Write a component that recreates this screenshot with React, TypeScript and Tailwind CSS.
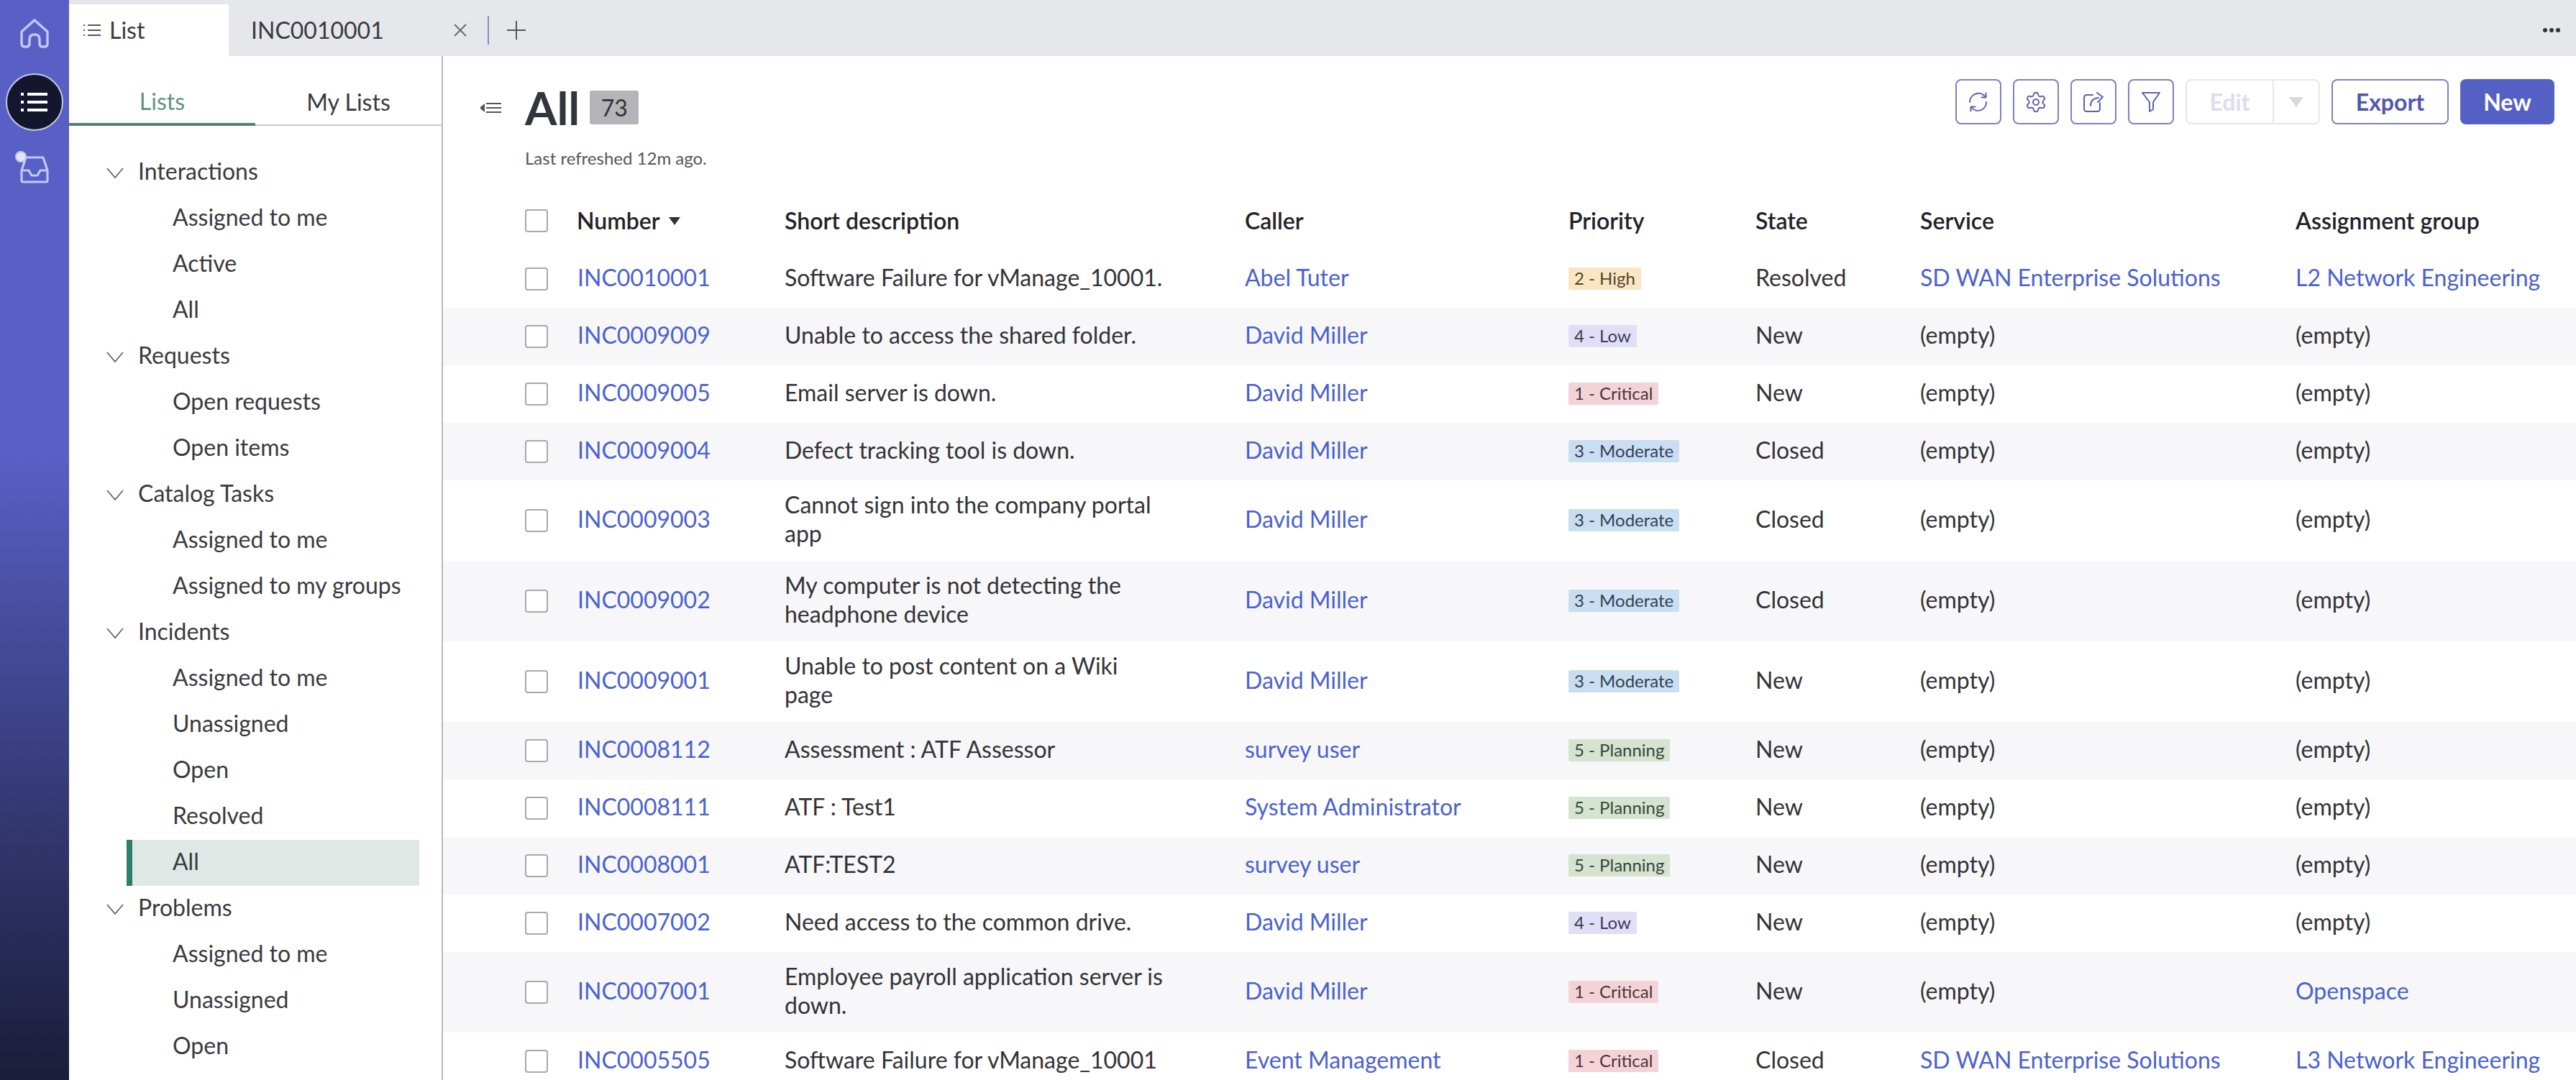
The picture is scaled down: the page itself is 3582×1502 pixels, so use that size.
import React from "react";
import { Settings } from "lucide-react";

type Row = {
  num: string; desc: string[]; caller: string; pri: string; state: string; service: string; group: string;
};

const rows: Row[] = [
  { num: "INC0010001", desc: ["Software Failure for vManage_10001."], caller: "Abel Tuter", pri: "2 - High", state: "Resolved", service: "SD WAN Enterprise Solutions", group: "L2 Network Engineering" },
  { num: "INC0009009", desc: ["Unable to access the shared folder."], caller: "David Miller", pri: "4 - Low", state: "New", service: "(empty)", group: "(empty)" },
  { num: "INC0009005", desc: ["Email server is down."], caller: "David Miller", pri: "1 - Critical", state: "New", service: "(empty)", group: "(empty)" },
  { num: "INC0009004", desc: ["Defect tracking tool is down."], caller: "David Miller", pri: "3 - Moderate", state: "Closed", service: "(empty)", group: "(empty)" },
  { num: "INC0009003", desc: ["Cannot sign into the company portal", "app"], caller: "David Miller", pri: "3 - Moderate", state: "Closed", service: "(empty)", group: "(empty)" },
  { num: "INC0009002", desc: ["My computer is not detecting the", "headphone device"], caller: "David Miller", pri: "3 - Moderate", state: "Closed", service: "(empty)", group: "(empty)" },
  { num: "INC0009001", desc: ["Unable to post content on a Wiki", "page"], caller: "David Miller", pri: "3 - Moderate", state: "New", service: "(empty)", group: "(empty)" },
  { num: "INC0008112", desc: ["Assessment : ATF Assessor"], caller: "survey user", pri: "5 - Planning", state: "New", service: "(empty)", group: "(empty)" },
  { num: "INC0008111", desc: ["ATF : Test1"], caller: "System Administrator", pri: "5 - Planning", state: "New", service: "(empty)", group: "(empty)" },
  { num: "INC0008001", desc: ["ATF:TEST2"], caller: "survey user", pri: "5 - Planning", state: "New", service: "(empty)", group: "(empty)" },
  { num: "INC0007002", desc: ["Need access to the common drive."], caller: "David Miller", pri: "4 - Low", state: "New", service: "(empty)", group: "(empty)" },
  { num: "INC0007001", desc: ["Employee payroll application server is", "down."], caller: "David Miller", pri: "1 - Critical", state: "New", service: "(empty)", group: "Openspace" },
  { num: "INC0005505", desc: ["Software Failure for vManage_10001"], caller: "Event Management", pri: "1 - Critical", state: "Closed", service: "SD WAN Enterprise Solutions", group: "L3 Network Engineering" },
];

const badgeClass: Record<string, string> = {
  "1": "bg-[#f4d3d8] text-[#4a3338]",
  "2": "bg-[#fae6c3] text-[#51452e]",
  "3": "bg-[#c9def1] text-[#2f4256]",
  "4": "bg-[#e0dff5] text-[#3c3c58]",
  "5": "bg-[#d5e3d0] text-[#35473a]",
};

const tree: { title: string; items: string[] }[] = [
  { title: "Interactions", items: ["Assigned to me", "Active", "All"] },
  { title: "Requests", items: ["Open requests", "Open items"] },
  { title: "Catalog Tasks", items: ["Assigned to me", "Assigned to my groups"] },
  { title: "Incidents", items: ["Assigned to me", "Unassigned", "Open", "Resolved", "All"] },
  { title: "Problems", items: ["Assigned to me", "Unassigned", "Open"] },
];

function Checkbox() {
  return <span className="block w-[32px] h-[32px] rounded-[4px] border-2 border-[#a9a9ad] bg-white" />;
}

function Rail() {
  return (
    <div className="w-[96px] shrink-0 h-full flex flex-col items-center bg-linear-to-b from-[#5860c6] from-[42%] to-[#1b1d3a]">
      <svg className="mt-[26px]" width="42" height="42" viewBox="0 0 42 42" fill="none" stroke="#c3c8f0" strokeWidth="3.4" strokeLinejoin="round">
        <path d="M3 18 L21 2 L39 18 V35 Q39 39 35 39 H32 Q28 39 28 35 V29 Q28 22 21 22 Q14 22 14 29 V35 Q14 39 10 39 H7 Q3 39 3 35 Z" />
      </svg>
      <div className="mt-[34px] w-[80px] h-[80px] rounded-full bg-[#14162d] border-2 border-[#c5c8e6] flex items-center justify-center">
        <svg width="38" height="28" viewBox="0 0 38 28" fill="#ffffff">
          <rect x="0" y="1" width="4" height="4" /><rect x="9" y="1" width="28" height="4" />
          <rect x="0" y="12" width="4" height="4" /><rect x="9" y="12" width="28" height="4" />
          <rect x="0" y="23" width="4" height="4" /><rect x="9" y="23" width="28" height="4" />
        </svg>
      </div>
      <div className="relative mt-[28px] w-[56px] h-[56px]">
        <svg className="absolute left-[7px] top-[5px]" width="42" height="40" viewBox="0 0 42 40" fill="none" stroke="#c3c8f0" strokeWidth="3.2" strokeLinejoin="round">
          <path d="M9 4 H33 L39 22 V36 Q39 38 37 38 H5 Q3 38 3 36 V22 Z" />
          <path d="M3 22 H13 L17 29 H25 L29 22 H39" />
        </svg>
        <span className="absolute left-[1px] top-0 w-[16px] h-[16px] rounded-full bg-[#e4e6f6] border-2 border-[#c3c8f0]" />
      </div>
    </div>
  );
}

function Tabs() {
  return (
    <div className="h-[78px] shrink-0 bg-[#e6e7eb] flex items-stretch text-[32px] text-[#3b3b3f]">
      <div className="w-[222px] mt-[6px] bg-white flex items-center pl-[20px] gap-[12px]">
        <svg width="24" height="18" viewBox="0 0 24 18" stroke="#55555a" strokeWidth="2" fill="none">
          <path d="M0 2 H2 M6 2 H24 M0 9 H2 M6 9 H24 M0 16 H2 M6 16 H24" />
        </svg>
        <span>List</span>
      </div>
      <div className="flex items-center pl-[31px] pt-[6px]">
        <span className="w-[282px]">INC0010001</span>
        <svg width="18" height="18" viewBox="0 0 18 18" stroke="#66666c" strokeWidth="1.8" fill="none">
          <path d="M1 1 L17 17 M17 1 L1 17" />
        </svg>
        <span className="ml-[29px] w-[2px] h-[40px] bg-[#8d8fc2]" />
        <svg className="ml-[25px]" width="26" height="26" viewBox="0 0 26 26" stroke="#55555a" strokeWidth="2" fill="none">
          <path d="M13 0 V26 M0 13 H26" />
        </svg>
      </div>
      <div className="ml-auto flex items-center pr-[22px] pt-[6px] gap-[3px]">
        <span className="w-[6px] h-[6px] rounded-full bg-[#333338]" />
        <span className="w-[6px] h-[6px] rounded-full bg-[#333338]" />
        <span className="w-[6px] h-[6px] rounded-full bg-[#333338]" />
      </div>
    </div>
  );
}

function Sidebar() {
  return (
    <div className="w-[520px] shrink-0 h-full border-r-2 border-[#b9b9bc] bg-white overflow-hidden text-[32px] text-[#3a3a3e]">
      <div className="flex h-[97px]">
        <div className="w-[259px] flex items-center justify-center pt-[32px] border-b-4 border-[#54806f] text-[#5f9484]">Lists</div>
        <div className="flex-1 flex items-center justify-center pt-[32px] border-b-2 border-[#c9c9cc]">My Lists</div>
      </div>
      <div className="pt-[33px]">
        {tree.map((g) => (
          <div key={g.title}>
            <div className="h-[64px] flex items-center pl-[52px]">
              <svg width="24" height="15" viewBox="0 0 24 15" stroke="#66666a" strokeWidth="1.8" fill="none">
                <path d="M1 1 L12 14 L23 1" />
              </svg>
              <span className="ml-[20px] pb-[4px]">{g.title}</span>
            </div>
            {g.items.map((it, i) => {
              const active = g.title === "Incidents" && it === "All";
              return (
                <div
                  key={i}
                  className={active
                    ? "h-[64px] ml-[80px] mr-[31px] pl-[56px] pb-[4px] flex items-center bg-[#dfe8e5] border-l-8 border-[#2f7d6b]"
                    : "h-[64px] pl-[144px] pb-[4px] flex items-center"}
                >
                  {it}
                </div>
              );
            })}
          </div>
        ))}
      </div>
    </div>
  );
}

function IconBtn({ children }: { children: React.ReactNode }) {
  return (
    <button className="w-[64px] h-[63px] rounded-[8px] border-2 border-[#7f81c2] bg-white flex items-center justify-center">
      {children}
    </button>
  );
}

function Toolbar() {
  const s = { fill: "none", stroke: "#5f62ad", strokeWidth: 2, strokeLinecap: "round" as const, strokeLinejoin: "round" as const };
  return (
    <div className="flex items-center gap-[16px] text-[32px] font-bold">
      <IconBtn>
        <svg width="30" height="30" viewBox="0 0 30 30" {...s}>
          <path d="M3 15 A12 12 0 0 1 24.5 7.5 M26 15 A11.5 11.5 0 0 1 5.5 22.5" />
          <path d="M25.5 2.5 V8.5 H19.5 M4.5 27.5 V21.5 H10.5" />
        </svg>
      </IconBtn>
      <IconBtn>
        <Settings size={32} strokeWidth={1.5} color="#5f62ad" />
      </IconBtn>
      <IconBtn>
        <svg width="30" height="30" viewBox="0 0 30 30" {...s}>
          <path d="M14 5 H6 Q2 5 2 9 V24 Q2 28 6 28 H20 Q24 28 24 24 V16" />
          <path d="M11 20 Q11 10 22 9 M20 2 L28 8 L21 15" />
        </svg>
      </IconBtn>
      <IconBtn>
        <svg width="28" height="30" viewBox="0 0 28 30" {...s}>
          <path d="M2 2 H26 L17 15 V25 L12 28 V15 Z" />
        </svg>
      </IconBtn>
      <div className="w-[187px] h-[63px] rounded-[8px] border-2 border-[#e6e6ec] flex items-center text-[#dddcec]">
        <span className="w-[121px] text-center border-r-2 border-[#e6e6ec] h-full flex items-center justify-center">Edit</span>
        <span className="flex-1 flex items-center justify-center">
          <svg width="20" height="14" viewBox="0 0 20 14" fill="#d8d8e0"><path d="M0 0 H20 L10 14 Z" /></svg>
        </span>
      </div>
      <button className="w-[163px] h-[63px] rounded-[8px] border-2 border-[#7f81c2] bg-white text-[#5157ad] flex items-center justify-center">Export</button>
      <button className="w-[131px] h-[63px] rounded-[8px] bg-[#5560c4] text-white flex items-center justify-center">New</button>
    </div>
  );
}

function Link({ children }: { children: React.ReactNode }) {
  return <span className="text-[#4b62cf]">{children}</span>;
}

function Cell({ v }: { v: string }) {
  return v === "(empty)" ? <span>{v}</span> : <Link>{v}</Link>;
}

function ListRow({ r, i }: { r: Row; i: number }) {
  return (
    <div className={`${r.desc.length > 1 ? "h-[112px]" : "h-[80px]"} ${i % 2 ? "bg-[#f7f7f9]" : "bg-white"} flex items-center pl-[114px]`}>
      <div className="w-[73px]"><Checkbox /></div>
      <div className="w-[288px] pb-[4px]"><Link>{r.num}</Link></div>
      <div className="w-[640px] leading-[40px] pb-[4px]">
        {r.desc.map((l, k) => <div key={k}>{l}</div>)}
      </div>
      <div className="w-[450px] pb-[4px]"><Link>{r.caller}</Link></div>
      <div className="w-[260px] flex items-center pb-[2px]">
        <span className={`block h-[31px] leading-[30px] px-[8px] rounded-[2px] text-[24px] ${badgeClass[r.pri[0]]}`}>{r.pri}</span>
      </div>
      <div className="w-[229px] pb-[4px]">{r.state}</div>
      <div className="w-[522px] pb-[4px]"><Cell v={r.service} /></div>
      <div className="pb-[4px]"><Cell v={r.group} /></div>
    </div>
  );
}

function Main() {
  return (
    <div className="flex-1 min-w-0 h-full overflow-hidden bg-white text-[32px] text-[#333337]">
      <div className="h-[188px] flex items-start justify-between pt-[32px] pr-[30px]">
        <div className="flex items-start pl-[52px]">
          <svg className="mt-[32px]" width="29" height="16" viewBox="0 0 29 16" fill="none" stroke="#55555c" strokeWidth="2">
            <path d="M8 2 H29 M8 8 H29 M8 14 H29" />
            <path d="M5 4 L0 8 L5 12 Z" fill="#55555c" />
          </svg>
          <div className="ml-[33px] pt-[16px]">
            <div className="flex items-center h-[47px]">
              <span className="text-[64px] font-bold leading-none text-[#34343c]">All</span>
              <span className="ml-[14px] w-[68px] h-[47px] rounded-[3px] bg-[#b5b5b9] flex items-center justify-center text-[32px] text-[#333337]">73</span>
            </div>
            <div className="mt-[33px] text-[24px] leading-[28px] text-[#55555a]">Last refreshed 12m ago.</div>
          </div>
        </div>
        <Toolbar />
      </div>
      <div className="h-[82px] flex items-center pl-[114px] font-semibold text-[#222226]">
        <div className="w-[73px]"><Checkbox /></div>
        <div className="w-[288px] flex items-center gap-[12px] -ml-[1px]">
          <span>Number</span>
          <svg width="16" height="11" viewBox="0 0 16 11" fill="#333337"><path d="M0 0 H16 L8 11 Z" /></svg>
        </div>
        <div className="w-[640px] ml-[1px]">Short description</div>
        <div className="w-[450px]">Caller</div>
        <div className="w-[260px]">Priority</div>
        <div className="w-[229px]">State</div>
        <div className="w-[522px]">Service</div>
        <div>Assignment group</div>
      </div>
      {rows.map((r, i) => <ListRow key={r.num} r={r} i={i} />)}
    </div>
  );
}

export default function App() {
  return (
    <div className="w-[3582px] h-[1502px] overflow-hidden flex font-['Lato',sans-serif] bg-white">
      <Rail />
      <div className="flex-1 min-w-0 flex flex-col h-full">
        <Tabs />
        <div className="flex-1 min-h-0 flex">
          <Sidebar />
          <Main />
        </div>
      </div>
    </div>
  );
}
